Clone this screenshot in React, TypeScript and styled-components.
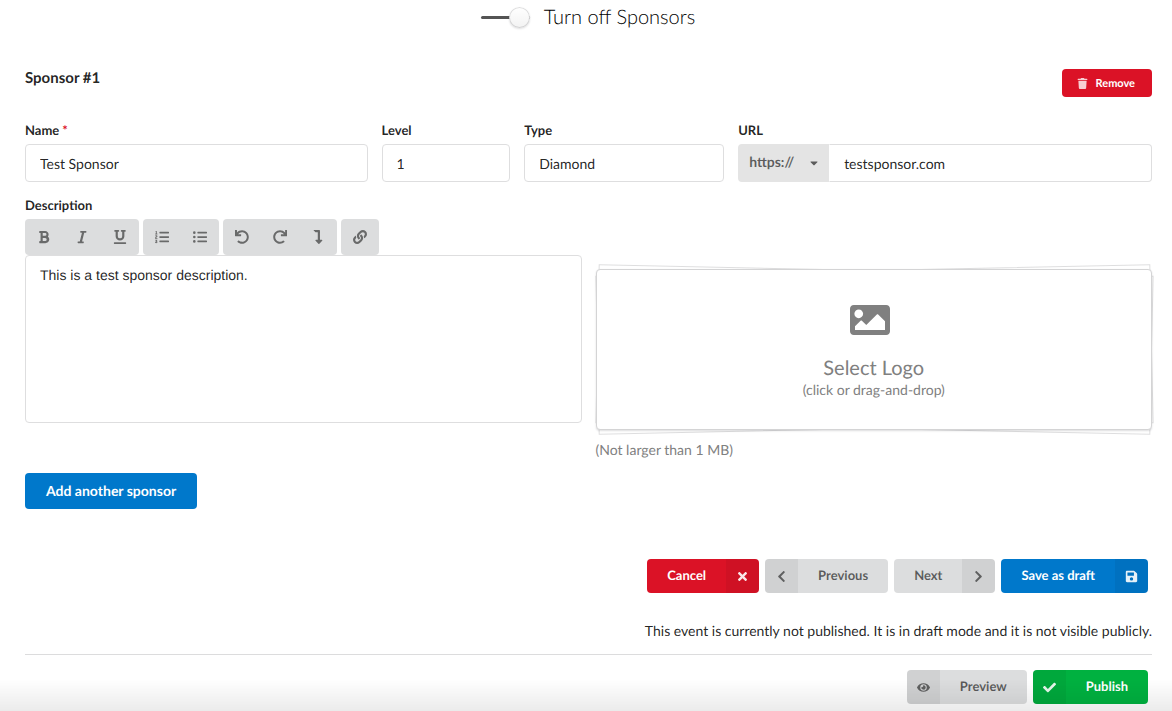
import React, { useState } from "react";
import styled, { createGlobalStyle, css } from "styled-components";
import {
  FaBold,
  FaItalic,
  FaUnderline,
  FaListOl,
  FaListUl,
  FaUndo,
  FaRedo,
  FaLevelDownAlt,
  FaLink,
  FaTrash,
  FaTimes,
  FaChevronLeft,
  FaChevronRight,
  FaSave,
  FaEye,
  FaCheck,
  FaImage,
  FaCaretDown,
} from "react-icons/fa";

const GlobalStyle = createGlobalStyle`
  *, *::before, *::after {
    box-sizing: border-box;
    text-rendering: geometricPrecision;
  }
  body {
    margin: 0;
    background: #fff;
    color: rgba(0, 0, 0, 0.87);
    font-family: Lato, "Liberation Sans", sans-serif;
    font-size: 14px;
    line-height: 20px;
  }
  button, input, select { font-family: inherit; }
`;

const Page = styled.main`
  padding: 3px 20px 8px 25px;
`;

const ToggleRow = styled.div`
  display: flex;
  align-items: center;
  justify-content: center;
  gap: 14px;
  height: 28px;
  margin-bottom: 38px;
  padding-right: 1px;
`;

const Toggle = styled.input`
  appearance: none;
  position: relative;
  width: 49px;
  height: 21px;
  margin: 0;
  cursor: pointer;

  &::before {
    content: "";
    position: absolute;
    top: 9px;
    left: 0;
    width: 100%;
    height: 3px;
    border-radius: 3px;
    background: #545454;
  }

  &::after {
    content: "";
    position: absolute;
    top: 0;
    right: ${(p) => (p.checked ? "0" : "28px")};
    width: 21px;
    height: 21px;
    border-radius: 50%;
    background: #fff linear-gradient(transparent, rgba(0, 0, 0, 0.05));
    box-shadow: 0 1px 2px rgba(34, 36, 38, 0.15),
      inset 0 0 0 1px rgba(34, 36, 38, 0.15);
  }
`;

const ToggleLabel = styled.label`
  font-size: 20px;
  line-height: 28px;
  font-weight: 300;
  color: #000;
`;

const SectionHeader = styled.header`
  display: flex;
  justify-content: space-between;
  height: 28px;
  margin-bottom: 23px;
`;

const SectionTitle = styled.h4`
  margin: 0;
  font-size: 15px;
  line-height: 18px;
  font-weight: 700;
`;

type Tone = "red" | "blue" | "green" | "grey";

const tones: Record<Tone, { background: string; color: string }> = {
  red: { background: "#db1226", color: "#fff" },
  blue: { background: "#0078cb", color: "#fff" },
  green: { background: "#00b140", color: "#fff" },
  grey: { background: "#dcddde", color: "rgba(0, 0, 0, 0.6)" },
};

const buttonBase = css<{ $tone: Tone }>`
  border: 0;
  border-radius: 4px;
  font-weight: 700;
  cursor: pointer;
  background: ${(p) => tones[p.$tone].background};
  color: ${(p) => tones[p.$tone].color};
`;

const RemoveButton = styled.button<{ $tone: Tone }>`
  ${buttonBase}
  display: flex;
  align-items: center;
  gap: 8px;
  padding: 1px 17px 0 15px;
  font-size: 11px;
  line-height: 27px;

  svg {
    font-size: 11px;
    opacity: 0.8;
  }
`;

const AddButton = styled.button<{ $tone: Tone }>`
  ${buttonBase}
  display: block;
  height: 36px;
  margin: 13px 0 50px;
  padding: 0 21px 2px;
  font-size: 14px;
`;

const Fields = styled.div`
  display: flex;
  margin: 0 -7px 13px;
`;

const Field = styled.div<{ $span: number }>`
  flex: 0 0 ${(p) => (p.$span * 100) / 16}%;
  min-width: 0;
  padding: 0 7px;
`;

const Label = styled.label`
  display: block;
  margin-bottom: 4px;
  font-size: 13px;
  line-height: 20px;
  font-weight: 700;
`;

const Required = styled.span`
  margin-left: 3px;
  color: #db1226;
`;

const TextInput = styled.input<{ $attached?: boolean }>`
  display: block;
  width: 100%;
  min-width: 0;
  height: 38px;
  padding: 0 14px;
  border: 1px solid #dededf;
  border-left-color: ${(p) => (p.$attached ? "transparent" : "#dededf")};
  border-radius: ${(p) => (p.$attached ? "0 4px 4px 0" : "4px")};
  background: #fff;
  color: rgba(0, 0, 0, 0.87);
  font-size: 14px;
  outline: 0;
`;

const UrlGroup = styled.div`
  display: flex;
`;

const ProtocolBox = styled.div`
  position: relative;
  flex: 0 0 91px;

  svg {
    position: absolute;
    top: 13px;
    right: 9px;
    font-size: 12px;
    color: rgba(0, 0, 0, 0.6);
    pointer-events: none;
  }
`;

const Protocol = styled.select`
  appearance: none;
  width: 100%;
  height: 38px;
  padding: 0 24px 4px 11px;
  border: 0;
  border-radius: 4px 0 0 4px;
  background: #e4e4e4;
  color: rgba(0, 0, 0, 0.6);
  font-size: 14px;
  font-weight: 700;
`;

const Toolbar = styled.div`
  display: flex;
  gap: 4px;
`;

const ToolGroup = styled.div`
  display: flex;
  overflow: hidden;
  border-radius: 4px;
  background: #dcddde;
`;

const ToolButton = styled.button`
  display: flex;
  align-items: center;
  justify-content: center;
  width: 38px;
  height: 36px;
  padding: 0;
  border: 0;
  background: transparent;
  color: rgba(0, 0, 0, 0.52);
  font-size: 14px;
  cursor: pointer;
`;

const Description = styled.textarea`
  display: block;
  width: 100%;
  height: 168px;
  padding: 9px 14px;
  border: 1px solid #dededf;
  border-radius: 4px;
  color: rgba(0, 0, 0, 0.87);
  font: 14px/20px "Liberation Sans", Arial, sans-serif;
  resize: none;
  outline: 0;
`;

const LogoStack = styled.div`
  position: relative;
  margin-top: 74px;

  &::before,
  &::after {
    content: "";
    position: absolute;
    inset: 1px;
    border: 1px solid rgba(34, 36, 38, 0.15);
    background: #fff;
  }
  &::before { transform: rotate(1.2deg); }
  &::after { transform: rotate(-1.2deg); }
`;

const LogoDrop = styled.button`
  position: relative;
  z-index: 1;
  display: flex;
  flex-direction: column;
  align-items: center;
  width: 100%;
  height: 161px;
  padding: 30px 14px 0;
  border: 1px solid #d4d4d5;
  border-radius: 4px;
  background: #fff;
  box-shadow: 0 1px 2px rgba(34, 36, 38, 0.15);
  color: #808080;
  cursor: pointer;

  svg {
    margin-right: 8px;
    font-size: 40px;
  }
`;

const DropTitle = styled.span`
  margin-top: 16px;
  font-size: 20px;
  line-height: 24px;
`;

const DropHint = styled.span`
  font-size: 14px;
  line-height: 20px;
`;

const SizeNote = styled.p`
  margin: 10px 0 0;
  color: #808080;
`;

const Actions = styled.div`
  display: flex;
  justify-content: flex-end;
  gap: 6px;
  padding-right: 4px;
`;

const ActionButton = styled.button<{ $tone: Tone; $iconSide: "left" | "right" }>`
  ${buttonBase}
  display: flex;
  flex-direction: ${(p) => (p.$iconSide === "left" ? "row-reverse" : "row")};
  overflow: hidden;
  height: 34px;
  padding: 0;
  font-size: 13px;
  line-height: 32px;
`;

const ActionText = styled.span`
  padding: 0 20px;
`;

const ActionIcon = styled.span`
  display: flex;
  align-items: center;
  justify-content: center;
  width: 33px;
  height: 100%;
  background: rgba(0, 0, 0, 0.05);

  svg {
    font-size: 13px;
    opacity: 0.9;
  }
`;

const Status = styled.p`
  margin: 28px 0 13px;
  text-align: right;
`;

const Divider = styled.hr`
  margin: 0 0 15px;
  border: 0;
  border-top: 1px solid #dcdcdd;
`;

const BottomShade = styled.div`
  position: fixed;
  inset: auto 0 0;
  height: 32px;
  background: linear-gradient(transparent, rgba(0, 0, 0, 0.08));
  pointer-events: none;
`;

const toolGroups = [
  [
    { name: "Bold", Icon: FaBold },
    { name: "Italic", Icon: FaItalic },
    { name: "Underline", Icon: FaUnderline },
  ],
  [
    { name: "Numbered list", Icon: FaListOl },
    { name: "Bulleted list", Icon: FaListUl },
  ],
  [
    { name: "Undo", Icon: FaUndo },
    { name: "Redo", Icon: FaRedo },
    { name: "Line break", Icon: FaLevelDownAlt },
  ],
  [{ name: "Link", Icon: FaLink }],
];

type ActionProps = {
  tone: Tone;
  side: "left" | "right";
  Icon: React.ComponentType;
  children: React.ReactNode;
};

function Action({ tone, side, Icon, children }: ActionProps) {
  return (
    <ActionButton type="button" $tone={tone} $iconSide={side}>
      <ActionText>{children}</ActionText>
      <ActionIcon>
        <Icon />
      </ActionIcon>
    </ActionButton>
  );
}

export default function App() {
  const [enabled, setEnabled] = useState(true);

  return (
    <>
      <GlobalStyle />
      <Page>
        <ToggleRow>
          <Toggle
            id="sponsors"
            type="checkbox"
            checked={enabled}
            onChange={(e) => setEnabled(e.target.checked)}
          />
          <ToggleLabel htmlFor="sponsors">Turn off Sponsors</ToggleLabel>
        </ToggleRow>

        <SectionHeader>
          <SectionTitle>Sponsor #1</SectionTitle>
          <RemoveButton type="button" $tone="red">
            <FaTrash />
            Remove
          </RemoveButton>
        </SectionHeader>

        <Fields>
          <Field $span={5}>
            <Label htmlFor="name">
              Name<Required>*</Required>
            </Label>
            <TextInput id="name" defaultValue="Test Sponsor" required />
          </Field>
          <Field $span={2}>
            <Label htmlFor="level">Level</Label>
            <TextInput id="level" defaultValue="1" />
          </Field>
          <Field $span={3}>
            <Label htmlFor="type">Type</Label>
            <TextInput id="type" defaultValue="Diamond" />
          </Field>
          <Field $span={6}>
            <Label htmlFor="url">URL</Label>
            <UrlGroup>
              <ProtocolBox>
                <Protocol aria-label="Protocol" defaultValue="https://">
                  <option>https://</option>
                  <option>http://</option>
                </Protocol>
                <FaCaretDown />
              </ProtocolBox>
              <TextInput id="url" defaultValue="testsponsor.com" $attached />
            </UrlGroup>
          </Field>
        </Fields>

        <Fields>
          <Field $span={8}>
            <Label htmlFor="description">Description</Label>
            <Toolbar>
              {toolGroups.map((group) => (
                <ToolGroup key={group[0].name}>
                  {group.map(({ name, Icon }) => (
                    <ToolButton key={name} type="button" aria-label={name}>
                      <Icon />
                    </ToolButton>
                  ))}
                </ToolGroup>
              ))}
            </Toolbar>
            <Description
              id="description"
              defaultValue="This is a test sponsor description."
            />
          </Field>
          <Field $span={8}>
            <LogoStack>
              <LogoDrop type="button">
                <FaImage />
                <DropTitle>Select Logo</DropTitle>
                <DropHint>(click or drag-and-drop)</DropHint>
              </LogoDrop>
            </LogoStack>
            <SizeNote>(Not larger than 1 MB)</SizeNote>
          </Field>
        </Fields>

        <AddButton type="button" $tone="blue">
          Add another sponsor
        </AddButton>

        <Actions>
          <Action tone="red" side="right" Icon={FaTimes}>Cancel</Action>
          <Action tone="grey" side="left" Icon={FaChevronLeft}>Previous</Action>
          <Action tone="grey" side="right" Icon={FaChevronRight}>Next</Action>
          <Action tone="blue" side="right" Icon={FaSave}>Save as draft</Action>
        </Actions>

        <Status>
          This event is currently not published. It is in draft mode and it is
          not visible publicly.
        </Status>
        <Divider />

        <Actions>
          <Action tone="grey" side="left" Icon={FaEye}>Preview</Action>
          <Action tone="green" side="left" Icon={FaCheck}>Publish</Action>
        </Actions>
      </Page>
      <BottomShade />
    </>
  );
}
